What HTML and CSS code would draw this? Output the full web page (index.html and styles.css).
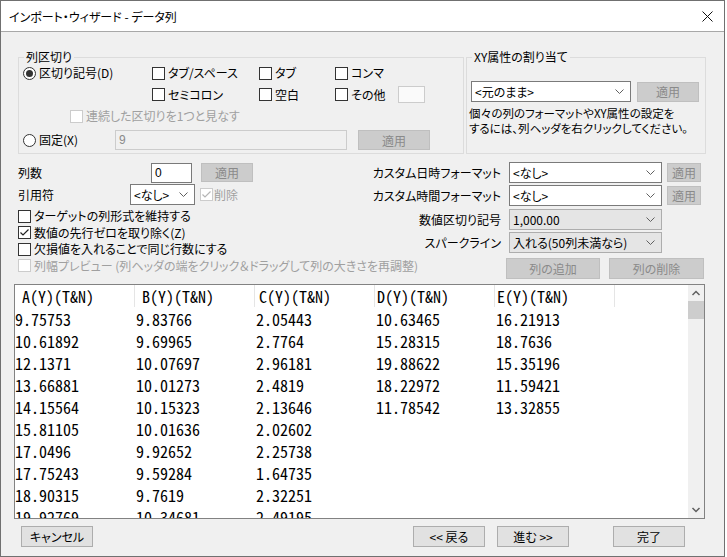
FILE: index.html
```html
<!DOCTYPE html>
<html lang="ja">
<head>
  <meta charset="UTF-8" />
  <meta name="viewport" content="width=device-width, initial-scale=1.0"/>
  <title>インポート・ウィザード - データ列</title>
  <link rel="stylesheet" href="styles.css">
</head>
<body>
  <div class="dialog">
    <div class="titlebar">
      <span class="title">インポート・ウィザード - データ列</span>
      <svg class="close" width="11" height="11" viewBox="0 0 11 11"><path d="M0.5 0.5 L10.5 10.5 M10.5 0.5 L0.5 10.5" stroke="#111" stroke-width="1"/></svg>
    </div>

    <div class="main">
      <div class="groups">
        <fieldset class="group group-sep">
          <legend>列区切り</legend>
          <div class="sep-row row-a">
            <label class="opt w-main"><span class="radio on"></span>区切り記号(D)</label>
            <label class="opt w-1"><span class="cb"></span>タブ/スペース</label>
            <label class="opt w-2"><span class="cb"></span>タブ</label>
            <label class="opt"><span class="cb"></span>コンマ</label>
          </div>
          <div class="sep-row row-b">
            <label class="opt w-1"><span class="cb"></span>セミコロン</label>
            <label class="opt w-2"><span class="cb"></span>空白</label>
            <label class="opt w-3"><span class="cb"></span>その他</label>
            <span class="field field-off other"></span>
          </div>
          <div class="sep-row row-c">
            <label class="opt off"><span class="cb cb-off"></span>連続した区切りを1つと見なす</label>
          </div>
          <div class="sep-row row-d">
            <label class="opt w-fixed"><span class="radio"></span>固定(X)</label>
            <span class="field field-off fixed-w">9</span>
            <button class="btn off apply-fixed">適用</button>
          </div>
        </fieldset>

        <fieldset class="group group-xy">
          <legend>XY属性の割り当て</legend>
          <div class="xy-row">
            <div class="combo xy-combo">&lt;元のまま&gt;<svg class="chev" width="9" height="5" viewBox="0 0 9 5"><path d="M0.5 0.5 L4.5 4.5 L8.5 0.5" fill="none" stroke="#606060"/></svg></div>
            <button class="btn off xy-apply">適用</button>
          </div>
          <p class="hint">個々の列のフォーマットやXY属性の設定を<br>するには、列ヘッダを右クリックしてください。</p>
        </fieldset>
      </div>

      <div class="options">
        <div class="opt-left">
          <div class="line line-count">
            <span class="lbl lbl-count">列数</span>
            <span class="field count">0</span>
            <button class="btn off count-apply">適用</button>
          </div>
          <div class="line line-quote">
            <span class="lbl lbl-quote">引用符</span>
            <div class="combo quote">&lt;なし&gt;<svg class="chev" width="9" height="5" viewBox="0 0 9 5"><path d="M0.5 0.5 L4.5 4.5 L8.5 0.5" fill="none" stroke="#606060"/></svg></div>
            <label class="opt off del"><span class="cb cb-off"><svg width="11" height="11" viewBox="0 0 11 11"><path d="M1.5 5.5 L4 8 L9.5 2.5" fill="none" stroke="#b5b5b5" stroke-width="1.2"/></svg></span>削除</label>
          </div>
          <div class="checks">
            <label class="opt"><span class="cb"></span>ターゲットの列形式を維持する</label>
            <label class="opt"><span class="cb"><svg width="11" height="11" viewBox="0 0 11 11"><path d="M1.5 5.5 L4 8 L9.5 2.5" fill="none" stroke="#222" stroke-width="1.2"/></svg></span>数値の先行ゼロを取り除く(Z)</label>
            <label class="opt"><span class="cb"></span>欠損値を入れることで同じ行数にする</label>
            <label class="opt off"><span class="cb cb-off"></span>列幅プレビュー (列ヘッダの端をクリック＆ドラッグして列の大きさを再調整)</label>
          </div>
        </div>

        <div class="opt-right">
          <div class="formats">
            <span class="flbl">カスタム日時フォーマット</span>
            <div class="combo">&lt;なし&gt;<svg class="chev" width="9" height="5" viewBox="0 0 9 5"><path d="M0.5 0.5 L4.5 4.5 L8.5 0.5" fill="none" stroke="#606060"/></svg></div>
            <button class="btn off small">適用</button>

            <span class="flbl">カスタム時間フォーマット</span>
            <div class="combo">&lt;なし&gt;<svg class="chev" width="9" height="5" viewBox="0 0 9 5"><path d="M0.5 0.5 L4.5 4.5 L8.5 0.5" fill="none" stroke="#606060"/></svg></div>
            <button class="btn off small">適用</button>

            <span class="flbl">数値区切り記号</span>
            <div class="combo combo-list">1,000.00<svg class="chev" width="9" height="5" viewBox="0 0 9 5"><path d="M0.5 0.5 L4.5 4.5 L8.5 0.5" fill="none" stroke="#606060"/></svg></div>
            <span></span>

            <span class="flbl">スパークライン</span>
            <div class="combo combo-list">入れる(50列未満なら)<svg class="chev" width="9" height="5" viewBox="0 0 9 5"><path d="M0.5 0.5 L4.5 4.5 L8.5 0.5" fill="none" stroke="#606060"/></svg></div>
            <span></span>
          </div>
          <div class="col-btns">
            <button class="btn off add">列の追加</button>
            <button class="btn off remove">列の削除</button>
          </div>
        </div>
      </div>

      <div class="preview">
        <div class="sheet" id="sheet">
          <div class="srow head">
            <span>A(Y)(T&amp;N)</span>
            <span>B(Y)(T&amp;N)</span>
            <span>C(Y)(T&amp;N)</span>
            <span>D(Y)(T&amp;N)</span>
            <span>E(Y)(T&amp;N)</span>
          </div>
        </div>
        <div class="vscroll">
          <svg class="arrow" width="16" height="16" viewBox="0 0 16 16"><path d="M4.5 10 L8 6.5 L11.5 10" fill="none" stroke="#606060" stroke-width="1.5"/></svg>
          <div class="thumb"></div>
          <div class="track"></div>
          <svg class="arrow" width="16" height="16" viewBox="0 0 16 16"><path d="M4.5 6 L8 9.5 L11.5 6" fill="none" stroke="#606060" stroke-width="1.5"/></svg>
        </div>
      </div>
    </div>

    <div class="footer">
      <button class="btn cancel">キャンセル</button>
      <button class="btn back">&lt;&lt; 戻る</button>
      <button class="btn next">進む &gt;&gt;</button>
      <button class="btn finish">完了</button>
    </div>
  </div>

  <script>
    const columns = [
      ['9.75753', '10.61892', '12.1371', '13.66881', '14.15564', '15.81105', '17.0496', '17.75243', '18.90315', '19.92769'],
      ['9.83766', '9.69965', '10.07697', '10.01273', '10.15323', '10.01636', '9.92652', '9.59284', '9.7619', '10.34681'],
      ['2.05443', '2.7764', '2.96181', '2.4819', '2.13646', '2.02602', '2.25738', '1.64735', '2.32251', '2.49195'],
      ['10.63465', '15.28315', '19.88622', '18.22972', '11.78542'],
      ['16.21913', '18.7636', '15.35196', '11.59421', '13.32855']
    ];

    const sheet = document.getElementById('sheet');

    for (let i = 0; i < 10; i++) {
      let cells = '';
      for (const col of columns) {
        cells += `<span>${col[i] || ''}</span>`;
      }
      sheet.innerHTML += `<div class="srow">${cells}</div>`;
    }
  </script>
</body>
</html>
```

FILE: styles.css
```css
body {
  margin: 0;
  background: #fff;
  font-family: "Noto Sans CJK JP", "Noto Sans", sans-serif;
  font-size: 12px;
  font-feature-settings: "palt" 1;
  color: #000;
}

.dialog {
  width: 725px;
  height: 557px;
  box-sizing: border-box;
  border: 1px solid #707070;
  background: #f0f0f0;
  display: flex;
  flex-direction: column;
}

.titlebar {
  height: 30px;
  flex: none;
  background: #fff;
  border-bottom: 1px solid #a8a8a8;
  display: flex;
  align-items: center;
  justify-content: space-between;
  padding: 0 11px 0 8px;
}

.title {
  font-size: 12px;
}

.main {
  flex: 1;
  display: flex;
  flex-direction: column;
  min-height: 0;
}

/* ---- top group boxes ---- */
.groups {
  display: flex;
  gap: 2px;
  margin: 17px 0 0 17px;
}

.group {
  margin: 0;
  padding: 0 0 3px;
  min-width: 0;
  border: 1px solid #dcdcdc;
}

.group legend {
  margin-left: 5px;
  padding: 0 2px;
  line-height: 16px;
}

.group-sep { width: 446px; box-sizing: border-box; }
.group-xy { width: 240px; box-sizing: border-box; }

.sep-row {
  display: flex;
  align-items: center;
  padding-left: 4px;
}

.row-a { height: 16px; }
.row-b { height: 17px; margin-top: 5px; padding-left: 133px; }
.row-c { height: 16px; margin-top: 5px; padding-left: 51px; }
.row-d { height: 20px; margin-top: 6px; }

.w-main { width: 129px; }
.w-1 { width: 107px; }
.w-2 { width: 76px; }
.w-3 { width: 63px; }
.w-fixed { width: 92px; }

.opt {
  display: flex;
  align-items: center;
  gap: 3px;
  white-space: nowrap;
  line-height: 16px;
}

.opt.off { color: #a0a0a0; }

.cb, .radio {
  width: 13px;
  height: 13px;
  box-sizing: border-box;
  border: 1px solid #333;
  background: #fff;
  flex: none;
  display: flex;
  align-items: center;
  justify-content: center;
}

.cb-off { border-color: #cccccc; }

.radio { border-radius: 50%; }

.radio.on::after {
  content: "";
  width: 7px;
  height: 7px;
  border-radius: 50%;
  background: #333;
}

.field {
  box-sizing: border-box;
  border: 1px solid #7a7a7a;
  background: #fff;
  display: flex;
  align-items: center;
  padding-left: 3px;
  font-family: "Liberation Sans", sans-serif;
}

.field-off {
  border-color: #cccccc;
  background: #f0f0f0;
  color: #8a8a8a;
}

.other { width: 27px; height: 17px; background: #fafafa; }
.fixed-w { width: 232px; height: 20px; }

.btn {
  box-sizing: border-box;
  height: 21px;
  padding: 0;
  border: 1px solid #adadad;
  background: #e1e1e1;
  font: inherit;
  color: #000;
  flex: none;
}

.btn.off {
  background: #cccccc;
  border-color: #bfbfbf;
  color: #8a8a8a;
}

.apply-fixed { width: 72px; height: 20px; margin-left: 11px; }

.xy-row {
  display: flex;
  align-items: center;
  margin: 16px 0 0 4px;
}

.combo {
  box-sizing: border-box;
  height: 21px;
  border: 1px solid #7a7a7a;
  background: #fff;
  display: flex;
  align-items: center;
  justify-content: space-between;
  padding: 0 6px 0 3px;
  white-space: nowrap;
}

.combo-list {
  background: #e5e5e5;
  border-color: #adadad;
}

.chev { flex: none; }

.xy-combo { width: 160px; }
.xy-apply { width: 62px; height: 20px; margin-left: 6px; }

.hint {
  margin: 4px 0 0 2px;
  font-size: 11.5px;
  line-height: 15px;
  white-space: nowrap;
}

/* ---- options ---- */
.options {
  display: flex;
  margin-top: 8px;
}

.opt-left {
  width: 345px;
  padding-left: 17px;
}

.line {
  display: flex;
  align-items: center;
  height: 21px;
}

.line-quote { margin-top: 1px; }

.lbl-count { width: 133px; }
.lbl-quote { width: 112px; }

.count { width: 41px; height: 20px; }
.count-apply { width: 52px; height: 19px; margin-left: 9px; }

.quote { width: 65px; }
.del { margin-left: 5px; gap: 1px; }

.checks {
  margin-top: 3px;
  display: flex;
  flex-direction: column;
}

.checks .opt { height: 16.5px; }

.opt-right {
  width: 340px;
}

.formats {
  display: grid;
  grid-template-columns: 141px 153px 34px;
  grid-auto-rows: 21px;
  column-gap: 5px;
  row-gap: 2.33px;
  align-items: center;
}

.flbl {
  text-align: right;
  padding-right: 3px;
  white-space: nowrap;
}

.small { width: 34px; height: 19px; }

.col-btns {
  display: flex;
  gap: 9px;
  margin: 5px 0 0 143px;
}

.add { width: 94px; }
.remove { width: 95px; }

/* ---- preview table ---- */
.preview {
  flex: 1;
  min-height: 0;
  margin: 5px 19px 0 13px;
  border: 1px solid #828282;
  display: flex;
  overflow: hidden;
}

.sheet {
  flex: 1;
  background: #fff;
  overflow: hidden;
  font-family: "Noto Sans Mono CJK JP", "Liberation Mono", monospace;
  font-size: 16px;
}

.srow {
  display: grid;
  grid-template-columns: repeat(5, 120px);
  height: 22px;
  align-items: center;
  white-space: nowrap;
}

.srow span { padding-left: 1px; }
.srow span:first-child { padding-left: 0; }

.head span {
  height: 22px;
  line-height: 22px;
  box-sizing: border-box;
  border-right: 1px solid #e5e5e5;
}

.head span:nth-child(1),
.head span:nth-child(2) { padding-left: 7px; }
.head span:nth-child(3) { padding-left: 4px; }
.head span:nth-child(4),
.head span:nth-child(5) { padding-left: 2px; }

.vscroll {
  width: 16px;
  flex: none;
  background: #f0f0f0;
  display: flex;
  flex-direction: column;
}

.arrow { flex: none; }

.thumb {
  height: 18px;
  background: #cdcdcd;
}

.track { flex: 1; }

/* ---- footer ---- */
.footer {
  height: 37px;
  flex: none;
  display: flex;
  align-items: flex-start;
  padding: 7px 0 0 20px;
  box-sizing: border-box;
}

.footer .btn { width: 72px; }
.back { margin-left: 320px; }
.next { margin-left: 12px; }
.finish { margin-left: 44px; }
```
